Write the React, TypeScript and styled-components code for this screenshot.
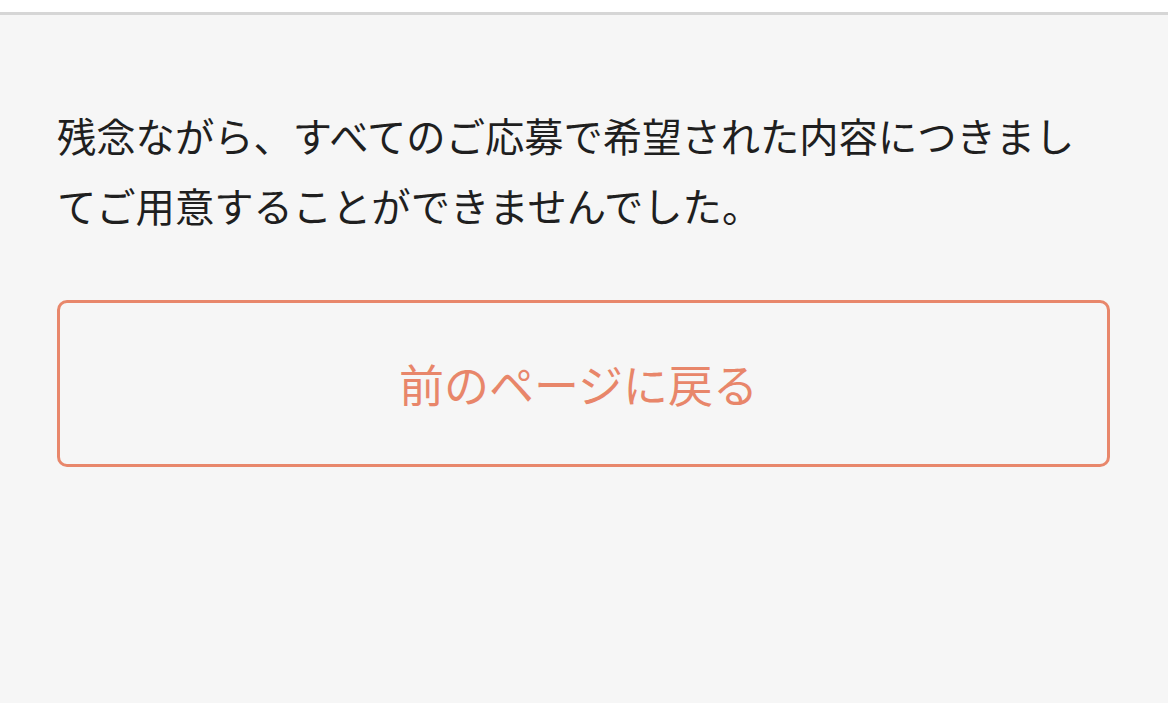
import React from "react";
import styled, { createGlobalStyle } from "styled-components";

const GlobalStyle = createGlobalStyle`
  html, body {
    margin: 0;
    padding: 0;
    background: #ffffff;
  }
  body {
    font-family: "Noto Sans CJK JP", "Noto Sans", sans-serif;
  }
`;

const Page = styled.div`
  padding-top: 12px;
  min-height: 703px;
  box-sizing: border-box;
  display: flex;
  flex-direction: column;
`;

const Content = styled.main`
  flex: 1;
  border-top: 3px solid #d6d6d6;
  background: #f6f6f6;
  padding: 85px 58px 0 57px;
  display: flex;
  flex-direction: column;
`;

const Message = styled.p`
  margin: 0;
  font-size: 39.3px;
  line-height: 70px;
  color: #1f1f1f;
  max-width: 1045px;
`;

const BackButton = styled.button`
  margin-top: 60px;
  height: 167px;
  width: 100%;
  box-sizing: border-box;
  border: 3px solid #e8876b;
  border-radius: 10px;
  background: transparent;
  color: #e8866a;
  font-family: inherit;
  font-size: 45px;
  padding: 0 10px 0 0;
  cursor: pointer;
  display: flex;
  align-items: center;
  justify-content: center;
`;

const App: React.FC = () => {
  return (
    <>
      <GlobalStyle />
      <Page>
        <Content>
          <Message>
            残念ながら、すべてのご応募で希望された内容につきましてご用意することができませんでした。
          </Message>
          <BackButton type="button">前のページに戻る</BackButton>
        </Content>
      </Page>
    </>
  );
};

export default App;
